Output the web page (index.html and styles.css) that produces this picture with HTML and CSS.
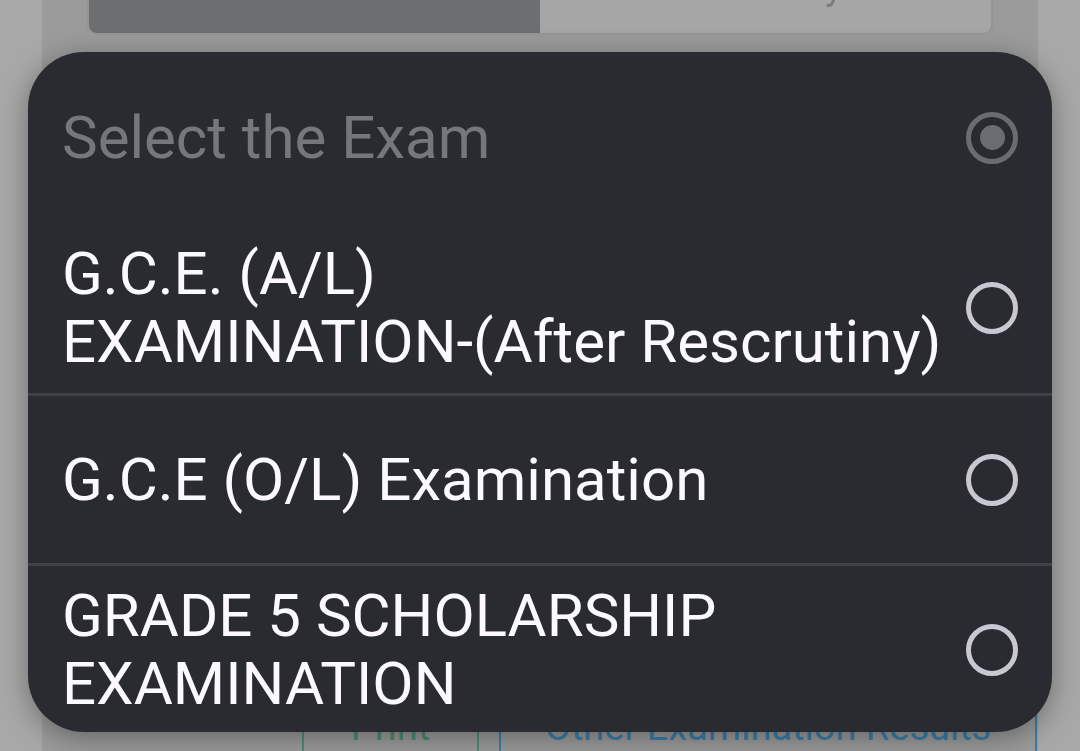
FILE: index.html
```html
<!DOCTYPE html>
<html lang="en">
<head>
<meta charset="utf-8">
<title>Select the Exam</title>
<link rel="stylesheet" href="styles.css">
</head>
<body>
<div class="page">
  <div class="card">
    <div class="tabs">
      <div class="tab tab-active"></div>
      <div class="tab tab-other">Summary</div>
    </div>
    <div class="actions">
      <div class="btn btn-print">Print</div>
      <div class="btn btn-other">Other Examination Results</div>
    </div>
  </div>
</div>

<div class="dialog">
  <div class="row title-row">
    <div class="label title">Select the Exam</div>
    <span class="radio radio-selected"><span class="dot"></span></span>
  </div>
  <div class="row item">
    <div class="label">G.C.E. (A/L) <span class="nowrap">EXAMINATION-(After Rescrutiny)</span></div>
    <span class="radio"></span>
  </div>
  <div class="row item">
    <div class="label">G.C.E (O/L) Examination</div>
    <span class="radio"></span>
  </div>
  <div class="row item">
    <div class="label">GRADE 5 SCHOLARSHIP EXAMINATION</div>
    <span class="radio"></span>
  </div>
</div>
</body>
</html>
```

FILE: styles.css
```css
html, body {
  margin: 0;
  padding: 0;
}

body {
  width: 1080px;
  height: 751px;
  overflow: hidden;
  background: #a8a8a8;
  font-family: Roboto, "Noto Sans", sans-serif;
  position: relative;
}

.page {
  padding: 0 42px;
  height: 751px;
  overflow: hidden;
}

.card {
  background: #9b9b9b;
  height: 800px;
  display: flex;
  flex-direction: column;
}

.tabs {
  display: flex;
  margin: -45px 45px 0;
  height: 78px;
  border: 2px solid #959595;
  border-top: none;
  border-radius: 0 0 10px 10px;
  overflow: hidden;
}

.tab {
  flex: 1;
  text-align: center;
  font-size: 36px;
  line-height: 40px;
  padding-top: 12px;
}

.tab-active {
  background: #6d6e70;
}

.tab-other {
  background: #a6a6a6;
  color: #7a7a7a;
}

.actions {
  display: flex;
  justify-content: flex-end;
  gap: 20px;
  margin-top: 615px;
  padding-right: 1px;
}

.btn {
  height: 120px;
  box-sizing: border-box;
  padding-top: 57px;
  text-align: center;
  font-size: 38px;
  line-height: 40px;
  border-left: 2px solid;
  border-right: 2px solid;
}

.btn-print {
  width: 177px;
  color: #4a8c6c;
  border-color: #4f8d70;
}

.btn-other {
  width: 538px;
  color: #3a7fa8;
  border-color: #3d7ea6;
}

.dialog {
  position: absolute;
  left: 28px;
  top: 52px;
  width: 1024px;
  height: 680px;
  background: #2a2b30;
  border-radius: 56px;
  box-shadow: 0 6px 28px rgba(0, 0, 0, 0.35);
  overflow: hidden;
}

.row {
  display: flex;
  align-items: center;
  gap: 28px;
  padding: 0 34px;
  height: 170px;
  box-sizing: border-box;
}

.title-row {
  height: 171px;
}

.item + .item {
  border-top: 3px solid #404146;
}

.label {
  flex: 1;
  min-width: 0;
  font-size: 60px;
  line-height: 68px;
  color: #fbf9fe;
}

.title {
  color: #76777c;
}

.nowrap {
  white-space: nowrap;
}

.radio {
  flex: none;
  width: 52px;
  height: 52px;
  box-sizing: border-box;
  border: 5px solid #c9c8d2;
  border-radius: 50%;
  display: flex;
  align-items: center;
  justify-content: center;
}

.radio-selected {
  border-color: #6b6c71;
}

.dot {
  width: 25px;
  height: 25px;
  border-radius: 50%;
  background: #6b6c71;
}
```
